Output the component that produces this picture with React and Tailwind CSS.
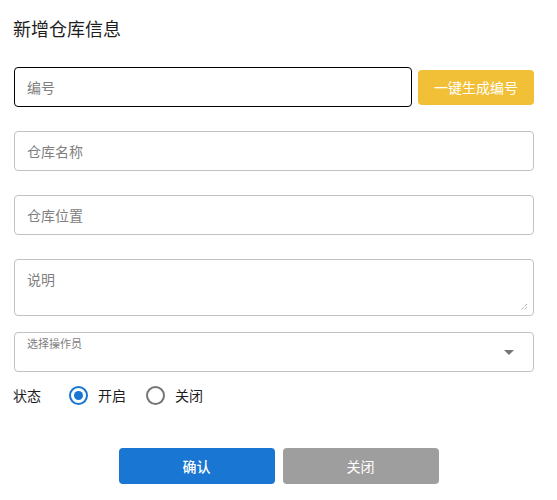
import React from "react";

const font = { fontFamily: '"Noto Sans", "Noto Sans CJK SC", sans-serif' };

function Radio({ checked, label }) {
  return (
    <label className="flex items-center cursor-pointer">
      <span
        className={`w-[19px] h-[19px] rounded-full border-2 flex items-center justify-center ${
          checked ? "border-[#1976d2]" : "border-[#757575]"
        }`}
      >
        {checked && <span className="w-[9px] h-[9px] rounded-full bg-[#1976d2]" />}
      </span>
      <span className="ml-[10px] text-[14px] text-[#1d1d1d]">{label}</span>
    </label>
  );
}

export default function App() {
  return (
    <div className="w-[557px] h-[500px] bg-white pl-[14px] pr-[23px]" style={font}>
      <div className="pt-[17px] h-[41px] text-[18px] leading-6 text-[#1d1d1d] -ml-px">新增仓库信息</div>

      <div className="mt-[26px] flex items-center gap-[6px]">
        <div className="flex-1 h-10 border border-black rounded flex items-center px-3 text-[14px] text-[#808080]">
          编号
        </div>
        <button className="w-[116px] h-[35px] bg-[#f2c037] rounded text-white text-[14px]">一键生成编号</button>
      </div>

      <div className="mt-[24px] h-10 border border-[#c2c2c2] rounded flex items-center px-3 text-[14px] text-[#808080]">
        仓库名称
      </div>

      <div className="mt-[24px] h-10 border border-[#c2c2c2] rounded flex items-center px-3 text-[14px] text-[#808080]">
        仓库位置
      </div>

      <div className="mt-[24px] h-[57px] border border-[#c2c2c2] rounded relative px-3 pt-[9px] text-[14px] text-[#808080]">
        说明
        <svg className="absolute right-[5px] bottom-[4px]" width="8" height="8" viewBox="0 0 8 8">
          <path d="M7 1 L1 7 M7 4 L4 7" stroke="#888" strokeWidth="1" strokeDasharray="1 1" fill="none" />
        </svg>
      </div>

      <div className="mt-[16px] h-10 border border-[#c2c2c2] rounded relative px-3 pt-[3px]">
        <div className="text-[11px] leading-4 text-[#808080]">选择操作员</div>
        <svg className="absolute right-[19px] top-[17px]" width="10" height="5" viewBox="0 0 10 5">
          <path d="M0 0 L10 0 L5 5 Z" fill="#757575" />
        </svg>
      </div>

      <div className="mt-[11px] h-6 flex items-center text-[14px]">
        <span className="text-[#1d1d1d] -ml-px">状态</span>
        <div className="ml-[28px] flex items-center gap-[20px]">
          <Radio checked label="开启" />
          <Radio label="关闭" />
        </div>
      </div>

      <div className="mt-[41px] flex justify-center gap-2 ml-[-14px] mr-[-23px]">
        <button className="w-[156px] h-9 bg-[#1976d2] rounded text-white text-[14px] font-medium">确认</button>
        <button className="w-[156px] h-9 bg-[#9e9e9e] rounded text-white text-[14px]">关闭</button>
      </div>
    </div>
  );
}
